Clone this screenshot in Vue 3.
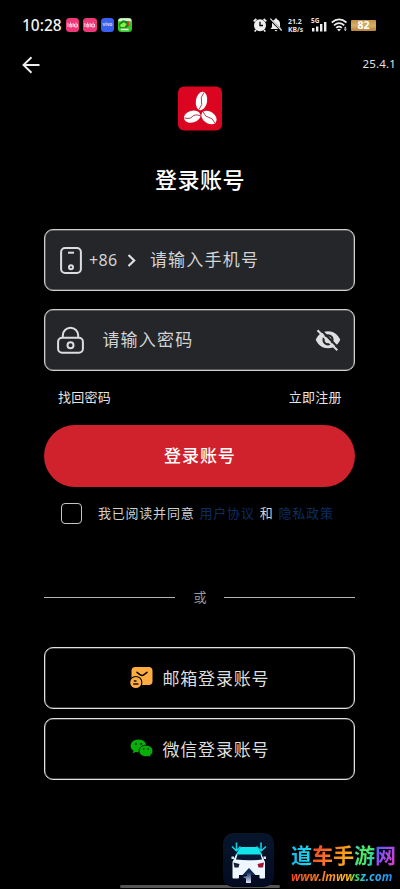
<script setup>
import { ref } from 'vue'

const agreed = ref(false)
const providers = [
  { id: 'email', label: '邮箱登录账号' },
  { id: 'wechat', label: '微信登录账号' },
]
</script>

<template>
  <div class="screen">
    <header class="status">
      <span class="clock">10:28</span>
      <div class="apps">
        <span class="app pink"><svg viewBox="0 0 14 14"><path d="M2 5v4M4 6v3h2V6M7.5 5v4M9 6v3h3V6M4.8 4.5v3M10.5 4.5v3" /></svg></span>
        <span class="app pink"><svg viewBox="0 0 14 14"><path d="M2 5v4M4 6v3h2V6M7.5 5v4M9 6v3h3V6M4.8 4.5v3M10.5 4.5v3" /></svg></span>
        <span class="app vivo">vivo</span>
        <span class="app game">
          <svg viewBox="0 0 14 14"><path fill="#d8f5cf" d="M0 0h14v3H0z" /><path fill="#16831c" d="M1 6l4-4 5 1 2 4-3 3H2z" /><path fill="#8df23c" d="M2 7l4-3 3 2-2 3H3z" /><path fill="#d33b24" d="M10 3h1.5v5H10z" /><path fill="#effff0" d="M3 11h8v1.5H3z" /></svg>
        </span>
      </div>
      <div class="signals">
        <svg class="alarm" viewBox="0 0 14 14">
          <circle cx="7" cy="7.2" r="6" fill="#eee" />
          <path d="M.7 3.4 3.4 1M13.3 3.4 10.6 1M3 12l-1.3 1.5M11 12l1.3 1.5" stroke="#eee" stroke-width="1.8" />
          <path d="M7 3.7v3.8h3" fill="none" stroke="#000" stroke-width="1.3" />
        </svg>
        <svg class="bell" viewBox="0 0 12 14">
          <path d="M6 .5c.8 0 1.3.5 1.3 1.2C9.200 2.300 10 3.800 10 5.600V9l1.500 2H.5L2 9V5.600C2 3.800 2.800 2.300 4.700 1.700 4.700 1 5.200.5 6 .5zM4.500 12h3L6 13.600z" fill="#eee" />
          <path d="M0 1.200 12 13" stroke="#000" stroke-width="2.200" /><path d="M.3.7 11.700 12.500" stroke="#eee" stroke-width="1.100" />
        </svg>
        <div class="speed"><span>21.2</span><span>KB/s</span></div>
        <div class="cell">
          <span>5G</span>
          <svg viewBox="0 0 16 14"><path d="M1 10h2.400v3.500H1zM5 8.500h2.400v5H5zM9 6h2.400v7.500H9zM13 4h2.400v9.500H13z" fill="#eee" /></svg>
        </div>
        <svg class="wifi" viewBox="0 0 17 14">
          <path d="M.8 4.500Q8 -1.600 15.500 4.500M3 7.300Q8 3 13.300 7.300M5.200 9.900Q8 7.500 10.800 9.900" fill="none" stroke="#eee" stroke-width="1.700" />
          <path d="M6 11h4l-2 2.500zM13 10.500l1.300-2 1.300 2zM13 11.200l1.300 2 1.300-2z" fill="#eee" />
        </svg>
        <span class="battery">82</span>
      </div>
    </header>

    <nav class="topbar">
      <svg class="back" viewBox="0 0 18 18"><path d="M17.500 9H1.500M9.500 1.200 1.500 9l8 7.800" /></svg>
      <span class="version">25.4.1</span>
    </nav>

    <main class="content">
      <svg class="logo" viewBox="0 0 44 44">
        <rect width="44" height="44" rx="6" fill="#dc0521" />
        <g transform="translate(23.500 14.500) rotate(9)"><ellipse rx="5.600" ry="9.300" fill="#fff" /><path d="M1-8.500Q-2-3 0 0T-1 8.500" class="seam" /></g>
        <g transform="translate(14.200 30.200) rotate(74)"><ellipse rx="5.900" ry="8.400" fill="#fff" /><path d="M1-7.800Q-2-3 0 0T-1 7.800" class="seam" /></g>
        <g transform="translate(31 31) rotate(-54)"><ellipse rx="5.900" ry="8.400" fill="#fff" /><path d="M1-7.800Q-2-3 0 0T-1 7.800" class="seam" /></g>
      </svg>
      <h1>登录账号</h1>

      <div class="field phone">
        <svg class="phone-icon" viewBox="0 0 22 27"><rect x="1.100" y="1.100" width="19.800" height="24.800" rx="4" /><path d="M8 5.700h6" /><circle cx="11" cy="20.300" r="2" /></svg>
        <span class="code">+86</span>
        <svg class="chevron" viewBox="0 0 9 13"><path d="m1.500 1 5.700 5.500L1.500 12" /></svg>
        <span class="hint">请输入手机号</span>
      </div>
      <div class="field password">
        <svg class="lock-icon" viewBox="0 0 27 27"><rect x="1.100" y="10.800" width="24.800" height="15" rx="4" /><path d="M5.800 10.500V8.400a7.700 7.700 0 0 1 15.400 0v2.100" /><circle cx="13.500" cy="18.200" r="3" /></svg>
        <span class="hint">请输入密码</span>
        <svg class="eye" viewBox="0 0 26 22">
          <path fill="#dedfe0" fill-rule="evenodd" d="M.7 10.800C3 5.700 7.500 2.300 13 2.300s10 3.400 12.300 8.500C23 15.900 18.500 19.300 13 19.300S3 15.900.7 10.800zM13 5.200a5.600 5.600 0 1 0 0 11.200 5.600 5.600 0 0 0 0-11.200z" />
          <circle cx="13" cy="10.800" r="3.400" fill="#dedfe0" />
          <path d="m4.500-.5 19 19.500" stroke="#242629" stroke-width="2.200" />
          <path d="m2.500 1.200 19.800 20" stroke="#dedfe0" stroke-width="2" />
        </svg>
      </div>

      <div class="links"><a>找回密码</a><a>立即注册</a></div>
      <button class="submit">登录账号</button>

      <div class="agreement">
        <span class="check" :class="{ on: agreed }" @click="agreed = !agreed"></span>
        <span class="read">我已阅读并同意</span>
        <a>用户协议</a><span class="and">和</span><a>隐私政策</a>
      </div>

      <div class="divider"><i></i><span>或</span><i></i></div>

      <div class="providers">
        <button v-for="p in providers" :key="p.id" class="provider">
          <svg v-if="p.id === 'email'" viewBox="0 0 23 23">
            <rect x="1.500" y="1" width="21" height="18" rx="3.800" fill="#ffad42" />
            <path d="m7 6.300 3.300 2.600q1.700 1.300 3.400 0L17 6.300" fill="none" stroke="#080604" stroke-width="1.500" stroke-linecap="round" />
            <circle cx="5.800" cy="16.500" r="6.600" fill="#000" /><circle cx="5.800" cy="16.500" r="5.500" fill="#ffad42" />
            <path d="M3.800 15h2.700M3.200 18h5.200" stroke="#160e03" stroke-width="1.300" />
          </svg>
          <svg v-else viewBox="0 0 23 23">
            <path fill="#09ad09" d="M8.500 2.500C13 2.500 16.300 5.300 16.300 9S13 15.300 8.500 15.300c-1 0-1.800-.1-2.700-.4L2.800 16.300l.8-2.500C1.700 12.700.6 11 .6 9c0-3.700 3.400-6.500 7.900-6.500z" />
            <path fill="#09ad09" stroke="#000" stroke-width=".8" d="M15.900 8.200c4 0 7 2.600 7 5.700 0 1.800-1 3.300-2.500 4.400l.6 2.300-2.600-1.300c-.8.2-1.600.3-2.500.3-3.900 0-6.900-2.500-6.900-5.700s3-5.700 6.900-5.700z" />
            <g fill="#021e02"><circle cx="6" cy="7" r=".95" /><circle cx="11.200" cy="7" r=".95" /><circle cx="13.700" cy="12" r=".8" /><circle cx="18.200" cy="12" r=".8" /></g>
          </svg>
          <span>{{ p.label }}</span>
        </button>
      </div>
    </main>

    <div class="home-bar"></div>
    <div class="watermark">
      <svg class="car" viewBox="0 0 51 55">
        <defs>
          <linearGradient id="tile" x2="0" y2="1"><stop stop-color="#07162c" /><stop offset="1" stop-color="#020a20" /></linearGradient>
          <linearGradient id="road" x2="0" y2="1"><stop stop-color="#16305f" /><stop offset="1" stop-color="#dce7ff" /></linearGradient>
        </defs>
        <rect width="51" height="54" rx="10" fill="url(#tile)" />
        <path d="M9.500 29 13 21.500h25.500L42 29v15.500q0 1-1 1h-3.500q-1 0-1-1V42H16v2.500q0 1-1 1h-4.500q-1 0-1-1z" fill="#eef7ff" />
        <path d="m17.500 14h17l5 8h-27z" fill="#12e5e9" />
        <path d="M14.500 21.500h23l1.500 5q-13 1.500-26 0z" fill="#071936" />
        <path d="M10.500 29.500l6 1.500-1 3.500h-4z" fill="#172036" /><path d="m41 29.500-6.500 1.500 1 3.500h4.500z" fill="#9b182c" />
        <path d="M8.500 23.500h2.500v2.500H8.500zM40.500 23.500H43v2.500h-2.500z" fill="#cceeff" />
        <path d="M26 35 19.500 42h13z" fill="#122854" />
        <path d="M24 39.500h4V50h-5v-4.500L19.500 44l4.500-1z" fill="url(#road)" />
        <path d="M13.500 18.500V9.500M13.500 18 9 13.500M13.500 18l4-4.500M38 18.500V9.500M38 18l-4.500-4.500M38 18l5-4.500" fill="none" stroke="#15cfe1" stroke-width="1.600" />
      </svg>
      <div class="site">
        <div class="name"><b>道</b><b>车</b><b>手</b><b>游</b><b>网</b></div>
        <div class="url">www.lmwwsz.com</div>
      </div>
    </div>
  </div>
</template>

<style>
body { background: #000; }
</style>

<style scoped>
* { box-sizing: border-box; }
.screen { position: relative; width: 400px; height: 889px; overflow: hidden; background: #000; color: #e4e4e4; font-family: "Noto Sans", "Noto Sans CJK SC", sans-serif; }
svg { display: block; flex: none; overflow: visible; }
span, a { white-space: nowrap; }
.status { height: 50px; padding: 0 24px 0 22px; display: flex; align-items: center; }
.clock { width: 44px; font-size: 15.500px; font-weight: 500; line-height: 20px; color: #f2f2f2; }
.apps { display: flex; gap: 4px; }
.app { width: 13.4px; height: 14px; border-radius: 3.5px; overflow: hidden; }
.app svg { width: 100%; height: 14px; }
.pink { background: #ee3978; }
.pink path { fill: none; stroke: #ffe4ec; stroke-width: 1; }
.vivo { background: #3a60ee; color: #dde6ff; font-size: 5px; font-weight: 600; line-height: 13px; text-align: center; }
.game { background: #35c829; }
.signals { margin-left: auto; display: flex; align-items: center; }
.alarm { width: 14px; height: 14px; }
.bell { width: 12px; height: 14px; margin-left: 3px; }
.speed { width: 17px; margin-left: 6px; display: flex; flex-direction: column; gap: 1px; font-size: 6.800px; font-weight: 700; }
.speed span { height: 7px; line-height: 7px; overflow: hidden; }
.cell { position: relative; width: 16px; height: 14px; margin-left: 6px; }
.cell span { position: absolute; left: 0; top: -1px; font-size: 6.500px; line-height: 7px; font-weight: 700; }
.cell svg { width: 16px; height: 14px; }
.wifi { width: 17px; height: 14px; margin-left: 4px; }
.battery { width: 25px; height: 11px; margin-left: 3px; border-radius: 1px; background: linear-gradient(#c49345, #d5af69 50%, #b98336); color: #fff; font-size: 10.500px; line-height: 11px; font-weight: 700; text-align: center; }
.topbar { height: 30px; padding: 0 4px 0 22px; display: flex; align-items: center; justify-content: space-between; }
.back { width: 18px; height: 18px; }
.back path { fill: none; stroke: #eee; stroke-width: 1.9; }
.version { height: 18px; font-size: 11.5px; letter-spacing: .15px; line-height: 16px; }
.content { width: 311px; margin: 6px 0 0 44.400px; display: flex; flex-direction: column; }
.logo { align-self: center; width: 44px; height: 45px; }
.seam { fill: none; stroke: #a81b25; stroke-width: .8; }
h1 { margin: 33px 0 1px; height: 30px; line-height: 30px; font-size: 22px; font-weight: 500; letter-spacing: .5px; text-align: center; color: #fff; }
.field { height: 62px; display: flex; align-items: center; border: 1px solid #d0d2d1; box-shadow: inset 0 0 0 .5px #8c8e8e; border-radius: 9px; background: #242629; color: #d2d3d5; }
.phone { margin-top: 34px; padding-left: 15px; }
.password { margin-top: 18px; padding: 0 13px 0 12px; }
.phone-icon { width: 22px; height: 27px; }
.phone-icon *, .lock-icon * { fill: none; stroke: #dcddde; stroke-width: 2; }
.code { width: 38px; margin-left: 6.500px; font-size: 16px; letter-spacing: .4px; }
.chevron { width: 9px; height: 13px; }
.chevron path { fill: none; stroke: #dedfe0; stroke-width: 2.2; }
.hint { font-size: 17px; line-height: 24px; letter-spacing: 1.200px; }
.phone .hint { margin-left: 14px; }
.lock-icon { width: 27px; height: 27px; }
.password .hint { margin-left: 18px; }
.eye { width: 26px; height: 22px; margin-left: auto; }
.links { height: 20px; margin-top: 16px; padding: 0 13.500px; display: flex; justify-content: space-between; font-size: 13px; line-height: 20px; letter-spacing: .3px; }
button { font-family: inherit; padding: 0; }
.submit { height: 62px; margin-top: 17.500px; padding-bottom: 2px; border: 0; border-radius: 31px; background: #d0222d; color: #fff; font-size: 17px; font-weight: 500; letter-spacing: .9px; }
.agreement { height: 22px; margin-top: 16px; padding-left: 16.500px; display: flex; align-items: center; font-size: 13px; line-height: 20px; letter-spacing: .8px; color: #cfcfcf; }
.agreement a, .read, .and { padding-bottom: 2px; }
.agreement a { color: #092e60; }
.and { margin: 0 5px; }
.check { width: 21px; height: 21px; border: 1px solid #c5c5c5; border-radius: 4px; }
.check.on { background: #d0222d; }
.read { margin: 0 5px 0 16px; }
.divider { height: 20px; margin-top: 63px; display: flex; align-items: center; justify-content: space-between; color: #999; font-size: 13px; line-height: 18px; }
.divider span { padding-bottom: 2px; }
.divider i { width: 131px; height: 1.500px; background: #b4b4b4; }
.providers { margin-top: 39px; display: grid; gap: 9px; }
.provider { height: 62px; padding-bottom: 1px; display: flex; align-items: center; justify-content: center; gap: 9px; border: 1px solid #e2e2e2; box-shadow: inset 0 0 0 .5px #808080; border-radius: 9px; background: #000; color: #dedede; font-size: 17px; letter-spacing: .8px; }
.provider svg { width: 23px; height: 23px; }
.home-bar { position: absolute; left: 120px; top: 885px; width: 160px; height: 2.500px; border-radius: 2px; background: #555; }
.watermark { position: absolute; left: 223px; top: 833px; display: flex; }
.car { width: 51px; height: 55px; }
.site { margin: 10px 0 0 17px; }
.name { display: flex; font-size: 21px; line-height: 25px; }
.name b { width: 21px; font-weight: 700; background: linear-gradient(90deg, #12b9f0, #20d9ee); background-clip: text; color: transparent; }
.name b:nth-child(2) { background-image: linear-gradient(110deg, #ee3d26, #ff9127); }
.name b:nth-child(3) { background-image: linear-gradient(110deg, #f7761c, #ffc21c); }
.name b:nth-child(4) { background-image: linear-gradient(110deg, #31cfb2, #54ed5b, #12b9e5); }
.name b:nth-child(5) { background-image: linear-gradient(120deg, #3962ff, #a14bf3, #ed38b8); }
.url { width: max-content; margin-top: -1px; font-family: "Noto Sans", sans-serif; font-size: 11.800px; line-height: 19px; font-weight: 700; font-style: italic; background: linear-gradient(90deg, #ef4928, #ff9c20 45%, #ffbd20 57%, #40d65b 64%, #2bbdf0 73%, #258eee); background-clip: text; color: transparent; }
</style>
